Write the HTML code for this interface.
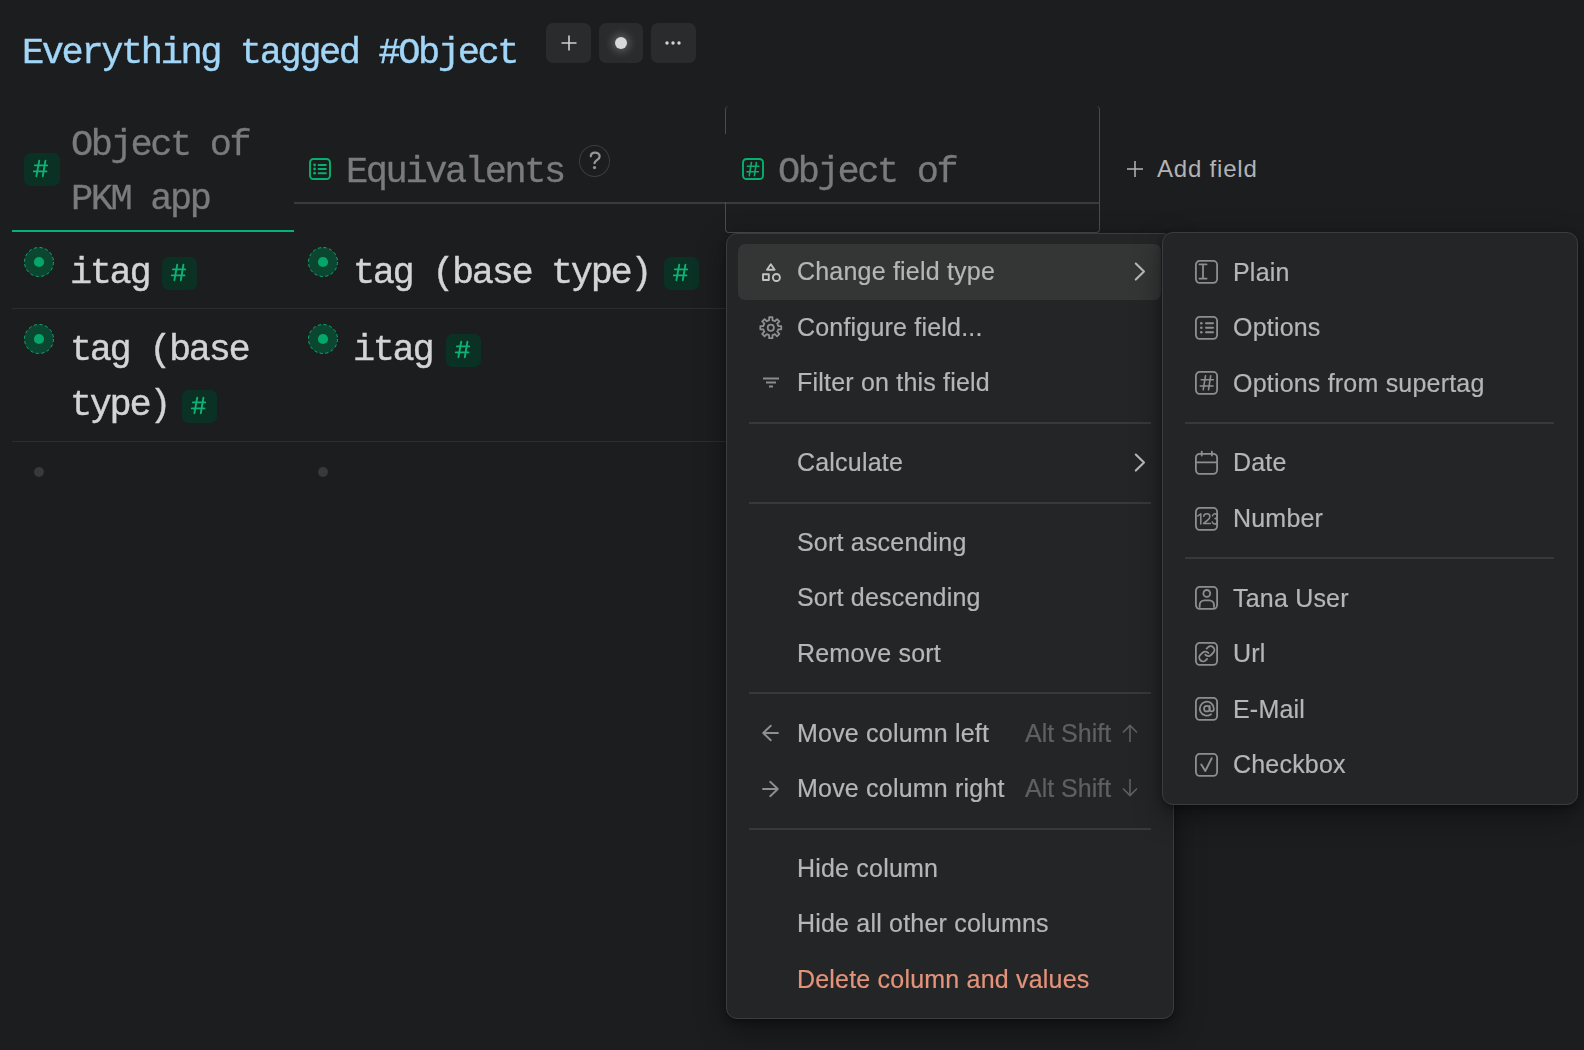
<!DOCTYPE html>
<html><head><meta charset="utf-8">
<style>
html,body{margin:0;padding:0;}
body{-webkit-font-smoothing:antialiased;width:1584px;height:1050px;background:#1c1d1f;position:relative;overflow:hidden;font-family:"Liberation Sans",sans-serif;}
.t{will-change:transform;position:absolute;white-space:pre;line-height:37px;font-family:"Liberation Mono",monospace;font-size:37px;letter-spacing:-2.4px;}
#title{left:22px;top:35px;color:#a2d6f8;-webkit-text-stroke:0.4px #a2d6f8;}
.btn{position:absolute;top:23px;width:45px;height:39.5px;background:#2a2b2d;border-radius:7px;}
.hdr{color:#7b7b7b;-webkit-text-stroke:0.3px #7b7b7b;}
.cell{color:#d4d4d4;-webkit-text-stroke:0.4px #d4d4d4;}
.badge{position:absolute;background:#0a3124;border-radius:6.5px;width:35px;height:33px;}
.badge b{position:absolute;left:0;right:0;top:5px;text-align:center;font-family:"Liberation Sans",sans-serif;font-weight:normal;font-size:23px;color:#1db57c;line-height:24px;}
.bullet{position:absolute;width:30px;height:30px;}
.bullet i{position:absolute;left:9px;top:9px;width:10px;height:10px;border-radius:50%;background:#11b47a;}
.edot{position:absolute;width:10px;height:10px;border-radius:50%;background:#38393b;}
.hline{position:absolute;height:1px;background:#2c2d2f;}
.menu{position:absolute;background:#242527;border:1px solid #3b3c3e;border-radius:11px;box-shadow:0 3px 6px rgba(0,0,0,0.28),0 10px 30px rgba(0,0,0,0.4);box-sizing:border-box;}
.mi{will-change:transform;-webkit-text-stroke:0.2px currentColor;position:absolute;font-size:25px;letter-spacing:0.2px;color:#b6b6b6;line-height:25px;white-space:pre;left:797.4px;}
.si{will-change:transform;-webkit-text-stroke:0.2px currentColor;position:absolute;font-size:25px;letter-spacing:0.2px;color:#b6b6b6;line-height:25px;white-space:pre;left:1233.4px;}
.sc{will-change:transform;-webkit-text-stroke:0.2px currentColor;position:absolute;font-size:25px;color:#5f6061;line-height:25px;white-space:pre;left:1025px;}
.sep{position:absolute;height:2px;background:#38393a;}
svg{position:absolute;overflow:visible;}
</style></head>
<body>
<!-- title -->
<div id="title" class="t">Everything tagged #Object</div>
<div class="btn" style="left:546px"></div>
<div class="btn" style="left:599px;width:44px"></div>
<div class="btn" style="left:651px"></div>
<svg style="left:561px;top:35px" width="16" height="16" viewBox="0 0 16 16"><path d="M8 0.5V15.5M0.5 8H15.5" stroke="#d0d0d0" stroke-width="1.6" fill="none"/></svg>
<div style="position:absolute;left:615px;top:37px;width:12px;height:12px;border-radius:50%;background:#d8d8d8;box-shadow:0 0 9px 3px rgba(255,255,255,0.22);"></div>
<svg style="left:664.8px;top:40.8px" width="18" height="4" viewBox="0 0 18 4"><circle cx="2" cy="2" r="1.7" fill="#d4d4d4"/><circle cx="8" cy="2" r="1.7" fill="#d4d4d4"/><circle cx="14" cy="2" r="1.7" fill="#d4d4d4"/></svg>

<!-- header col1 -->
<div class="badge" style="left:24px;top:153px;width:36px;"><svg width="35" height="33" viewBox="0 0 35 33" style="left:0;top:0"><path d="M15.2 7.8L12.4 23.2M21.4 7.8L18.8 23.2M10.9 12.4H23.2M9.8 18.4H22.5" stroke="#0cb375" stroke-width="1.9" stroke-linecap="round" fill="none"/></svg></div>
<div class="t hdr" style="left:71px;top:126.5px">Object of</div>
<div class="t hdr" style="left:71px;top:181px">PKM app</div>
<div style="position:absolute;left:12px;top:230px;width:282px;height:2px;background:#03b374;"></div>

<!-- header col2 -->
<svg style="left:309px;top:158px" width="22" height="22" viewBox="0 0 22 22"><rect x="1" y="1" width="20" height="20" rx="3.5" stroke="#06b06e" stroke-width="1.9" fill="none"/><path d="M9.6 7H16.8M9.6 11H16.8M9.6 15.2H16.8" stroke="#06b06e" stroke-width="2" stroke-linecap="round"/><circle cx="5.6" cy="7" r="1.4" fill="#06b06e"/><circle cx="5.6" cy="11" r="1.4" fill="#06b06e"/><circle cx="5.6" cy="15.2" r="1.4" fill="#06b06e"/></svg>
<div class="t hdr" style="left:346px;top:154px">Equivalents</div>
<div style="position:absolute;left:579px;top:145px;width:29px;height:30px;border-radius:50%;border:1px solid #3c3d3f;"></div>
<svg style="left:586px;top:148px" width="18" height="24" viewBox="0 0 18 24" fill="none" stroke="#959595" stroke-width="2.3" stroke-linecap="round"><path d="M4.8 8.3C4.8 6 6.7 4.6 9.1 4.6C11.6 4.6 13.6 6.2 13.6 8.4C13.6 10.5 11.9 11.3 10.6 12.3C9.3 13.3 8.5 14.1 8.5 15.2"/><circle cx="8.5" cy="19.6" r="1.6" fill="#959595" stroke="none"/></svg>
<div style="position:absolute;left:294px;top:202px;width:806px;height:2px;background:#3a3b3d;"></div>

<!-- header col3 (selected) -->
<div style="position:absolute;left:725px;top:106px;width:373px;height:126px;border:1px solid #4a4b4d;border-top:0;border-radius:4px;"></div>
<div style="position:absolute;left:724px;top:134px;width:4px;height:68px;background:#1c1d1f;"></div>
<svg style="left:742px;top:158px" width="22" height="22" viewBox="0 0 22 22"><rect x="1" y="1" width="20" height="20" rx="3.5" stroke="#06b06e" stroke-width="1.9" fill="none"/><path d="M9.4 4.6L7.3 17.7M14.4 4.6L12.4 17.7M5.4 8.3H16.9M5 13.7H16.3" stroke="#06b06e" stroke-width="1.6" stroke-linecap="round"/></svg>
<div class="t hdr" style="left:778px;top:154px">Object of</div>

<!-- add field -->
<svg style="left:1127px;top:161px" width="16" height="16" viewBox="0 0 16 16"><path d="M8 0V16M0 8H16" stroke="#b5b5b5" stroke-width="1.5" fill="none"/></svg>
<div style="position:absolute;left:1157px;top:157px;font-size:24px;line-height:24px;letter-spacing:0.8px;color:#b3b3b3;white-space:pre;">Add field</div>

<!-- rows -->
<div class="bullet" style="left:24px;top:247px"><svg width="30" height="30" viewBox="0 0 30 30" style="left:0;top:0"><circle cx="15" cy="15" r="14.5" fill="#0b4630" stroke="#0fa86e" stroke-width="1" stroke-dasharray="3.2 2.5"/><circle cx="15" cy="15" r="5.1" fill="#05a66a"/></svg></div>
<div class="t cell" style="left:70px;top:255px">itag</div>
<div class="badge" style="left:162px;top:257px"><svg width="35" height="33" viewBox="0 0 35 33" style="left:0;top:0"><path d="M15.2 7.8L12.4 23.2M21.4 7.8L18.8 23.2M10.9 12.4H23.2M9.8 18.4H22.5" stroke="#0cb375" stroke-width="1.9" stroke-linecap="round" fill="none"/></svg></div>
<div class="bullet" style="left:308px;top:247px"><svg width="30" height="30" viewBox="0 0 30 30" style="left:0;top:0"><circle cx="15" cy="15" r="14.5" fill="#0b4630" stroke="#0fa86e" stroke-width="1" stroke-dasharray="3.2 2.5"/><circle cx="15" cy="15" r="5.1" fill="#05a66a"/></svg></div>
<div class="t cell" style="left:353px;top:255px">tag (base type)</div>
<div class="badge" style="left:664px;top:257px"><svg width="35" height="33" viewBox="0 0 35 33" style="left:0;top:0"><path d="M15.2 7.8L12.4 23.2M21.4 7.8L18.8 23.2M10.9 12.4H23.2M9.8 18.4H22.5" stroke="#0cb375" stroke-width="1.9" stroke-linecap="round" fill="none"/></svg></div>
<div class="hline" style="left:12px;top:308px;width:714px;"></div>

<div class="bullet" style="left:24px;top:324px"><svg width="30" height="30" viewBox="0 0 30 30" style="left:0;top:0"><circle cx="15" cy="15" r="14.5" fill="#0b4630" stroke="#0fa86e" stroke-width="1" stroke-dasharray="3.2 2.5"/><circle cx="15" cy="15" r="5.1" fill="#05a66a"/></svg></div>
<div class="t cell" style="left:70px;top:332px">tag (base</div>
<div class="t cell" style="left:70px;top:387px">type)</div>
<div class="badge" style="left:182px;top:390px"><svg width="35" height="33" viewBox="0 0 35 33" style="left:0;top:0"><path d="M15.2 7.8L12.4 23.2M21.4 7.8L18.8 23.2M10.9 12.4H23.2M9.8 18.4H22.5" stroke="#0cb375" stroke-width="1.9" stroke-linecap="round" fill="none"/></svg></div>
<div class="bullet" style="left:308px;top:324px"><svg width="30" height="30" viewBox="0 0 30 30" style="left:0;top:0"><circle cx="15" cy="15" r="14.5" fill="#0b4630" stroke="#0fa86e" stroke-width="1" stroke-dasharray="3.2 2.5"/><circle cx="15" cy="15" r="5.1" fill="#05a66a"/></svg></div>
<div class="t cell" style="left:353px;top:332px">itag</div>
<div class="badge" style="left:446px;top:334px"><svg width="35" height="33" viewBox="0 0 35 33" style="left:0;top:0"><path d="M15.2 7.8L12.4 23.2M21.4 7.8L18.8 23.2M10.9 12.4H23.2M9.8 18.4H22.5" stroke="#0cb375" stroke-width="1.9" stroke-linecap="round" fill="none"/></svg></div>
<div class="hline" style="left:12px;top:441px;width:714px;"></div>

<div class="edot" style="left:34px;top:467px"></div>
<div class="edot" style="left:318px;top:467px"></div>

<!-- main menu -->
<div class="menu" style="left:726px;top:233px;width:448px;height:786px;"></div>
<div style="position:absolute;left:738px;top:244px;width:423px;height:56px;background:#343535;border-radius:7px;"></div>
<div class="mi" style="top:259px">Change field type</div>
<div class="mi" style="top:315px">Configure field...</div>
<div class="mi" style="top:370px">Filter on this field</div>
<div class="sep" style="left:749px;top:422px;width:402px;"></div>
<div class="mi" style="top:450px">Calculate</div>
<div class="sep" style="left:749px;top:502px;width:402px;"></div>
<div class="mi" style="top:530px">Sort ascending</div>
<div class="mi" style="top:585px">Sort descending</div>
<div class="mi" style="top:641px">Remove sort</div>
<div class="sep" style="left:749px;top:692px;width:402px;"></div>
<div class="mi" style="top:721px">Move column left</div>
<div class="sc" style="top:721px">Alt Shift</div>
<div class="mi" style="top:776px">Move column right</div>
<div class="sc" style="top:776px">Alt Shift</div>
<div class="sep" style="left:749px;top:828px;width:402px;"></div>
<div class="mi" style="top:856px">Hide column</div>
<div class="mi" style="top:911px">Hide all other columns</div>
<div class="mi" style="top:967px;color:#e4937a">Delete column and values</div>

<!-- main menu icons -->
<svg style="left:761px;top:262px" width="20" height="20" viewBox="0 0 20 20" fill="none" stroke="#c2c2c2" stroke-width="1.9" stroke-linejoin="round"><path d="M9.8 2.2L13.6 7.8H6Z"/><rect x="2" y="12.2" width="5.8" height="5.8"/><circle cx="15.4" cy="15.5" r="3.5"/></svg>
<svg style="left:759px;top:316px" width="24" height="24" viewBox="0 0 24 24" fill="none" stroke="#8f8f8f" stroke-width="1.8" stroke-linejoin="round"><path d="M8.89 4.68 L10.09 4.29 L10.14 1.23 L13.46 1.23 L13.51 4.29 L14.71 4.68 L15.83 5.25 L18.03 3.12 L20.38 5.47 L18.25 7.67 L18.82 8.79 L19.21 9.99 L22.27 10.04 L22.27 13.36 L19.21 13.41 L18.82 14.61 L18.25 15.73 L20.38 17.93 L18.03 20.28 L15.83 18.15 L14.71 18.72 L13.51 19.11 L13.46 22.17 L10.14 22.17 L10.09 19.11 L8.89 18.72 L7.77 18.15 L5.57 20.28 L3.22 17.93 L5.35 15.73 L4.78 14.61 L4.39 13.41 L1.33 13.36 L1.33 10.04 L4.39 9.99 L4.78 8.79 L5.35 7.67 L3.22 5.47 L5.57 3.12 L7.77 5.25Z"/><circle cx="11.8" cy="11.7" r="3.1"/></svg>
<svg style="left:762px;top:377.4px" width="18" height="12" viewBox="0 0 18 12" stroke="#8c8c8c" stroke-width="1.8"><path d="M1 1.5H17M4 5.5H14M7 9.5H11"/></svg>
<svg style="left:1134px;top:262px" width="12" height="19" viewBox="0 0 12 19" fill="none" stroke="#bababa" stroke-width="2.1" stroke-linecap="round" stroke-linejoin="round"><path d="M1.8 1.6L10 9.5L1.8 17.6"/></svg>
<svg style="left:1134px;top:453px" width="12" height="19" viewBox="0 0 12 19" fill="none" stroke="#bababa" stroke-width="2.1" stroke-linecap="round" stroke-linejoin="round"><path d="M1.8 1.6L10 9.5L1.8 17.6"/></svg>
<svg style="left:762px;top:725px" width="17" height="16" viewBox="0 0 17 16" fill="none" stroke="#8f8f8f" stroke-width="1.9" stroke-linecap="round" stroke-linejoin="round"><path d="M16 8H1.2M8.8 0.8L1.2 8L8.8 15.2"/></svg>
<svg style="left:762px;top:781px" width="17" height="16" viewBox="0 0 17 16" fill="none" stroke="#8f8f8f" stroke-width="1.9" stroke-linecap="round" stroke-linejoin="round"><path d="M1 8H15.8M8.2 0.8L15.8 8L8.2 15.2"/></svg>
<svg style="left:1122px;top:724px" width="16" height="18" viewBox="0 0 16 18" fill="none" stroke="#5f6061" stroke-width="1.6"><path d="M8 18V1.5M1 8.5L8 1.5L15 8.5"/></svg>
<svg style="left:1122px;top:779px" width="16" height="18" viewBox="0 0 16 18" fill="none" stroke="#5f6061" stroke-width="1.6"><path d="M8 0V16.5M1 9.5L8 16.5L15 9.5"/></svg>

<!-- submenu -->
<div class="menu" style="left:1162px;top:232px;width:416px;height:573px;"></div>
<div class="si" style="top:260px">Plain</div>
<div class="si" style="top:315px">Options</div>
<div class="si" style="top:371px">Options from supertag</div>
<div class="sep" style="left:1185px;top:422px;width:369px;"></div>
<div class="si" style="top:450px">Date</div>
<div class="si" style="top:506px">Number</div>
<div class="sep" style="left:1185px;top:557px;width:369px;"></div>
<div class="si" style="top:586px">Tana User</div>
<div class="si" style="top:641px">Url</div>
<div class="si" style="top:697px">E-Mail</div>
<div class="si" style="top:752px">Checkbox</div>

<!-- submenu icons -->
<svg style="left:1195px;top:260px" width="23" height="24" viewBox="0 0 23 24" fill="none" stroke="#8e8e8e" stroke-width="1.8" stroke-linecap="round" stroke-linejoin="round"><rect x="0.9" y="0.9" width="21.2" height="22" rx="3.8"/><path d="M4.4 4.3H11.6M8 4.3V18.6M4.4 18.6H11.6"/></svg>
<svg style="left:1195px;top:316px" width="23" height="24" viewBox="0 0 23 24" fill="none" stroke="#8e8e8e" stroke-width="1.8" stroke-linecap="round" stroke-linejoin="round"><rect x="0.9" y="0.9" width="21.2" height="22" rx="3.8"/><path d="M11 7.3H18M11 11.8H18M11 16.3H18" stroke-width="2"/><circle cx="6.3" cy="7.3" r="1.3" fill="#8e8e8e" stroke="none"/><circle cx="6.3" cy="11.8" r="1.3" fill="#8e8e8e" stroke="none"/><circle cx="6.3" cy="16.3" r="1.3" fill="#8e8e8e" stroke="none"/></svg>
<svg style="left:1195px;top:371px" width="23" height="24" viewBox="0 0 23 24" fill="none" stroke="#8e8e8e" stroke-width="1.8" stroke-linecap="round" stroke-linejoin="round"><rect x="0.9" y="0.9" width="21.2" height="22" rx="3.8"/><path d="M10.5 4.7L8.2 18.8M15.7 4.7L13.5 18.8M6.2 8.8H18.3M5.3 15H18" stroke-width="1.6"/></svg>
<svg style="left:1195px;top:451px" width="23" height="25" viewBox="0 0 23 25" fill="none" stroke="#8e8e8e" stroke-width="1.8" stroke-linecap="round" stroke-linejoin="round"><rect x="0.9" y="2.8" width="21.2" height="20.1" rx="3.8"/><path d="M0.9 11.4H22.1M6.7 0.6V4.5M16.9 0.6V4.5"/></svg>
<svg style="left:1195px;top:507px" width="23" height="24" viewBox="0 0 23 24" fill="none" stroke="#8e8e8e" stroke-width="1.8" stroke-linecap="round" stroke-linejoin="round"><path d="M2.7 9L5.8 6.8V17M8.7 9.3C8.9 7.7 10.1 6.8 11.8 6.8C13.6 6.8 14.9 7.9 14.9 9.5C14.9 11 14 11.9 12.6 13.1L8.6 16.4H15.3M17.5 8.8C17.8 7.5 18.7 6.8 19.9 6.8C21.3 6.8 22.2 7.8 22.2 9.2C22.2 10.6 21.2 11.6 19.9 11.6C21.4 11.6 22.4 12.6 22.4 14.2C22.4 16 21.3 17.1 19.9 17.1C18.7 17.1 17.7 16.3 17.3 15" stroke-width="1.5"/><rect x="0.9" y="0.9" width="21.2" height="22" rx="3.8"/></svg>
<svg style="left:1195px;top:586px" width="23" height="24" viewBox="0 0 23 24" fill="none" stroke="#8e8e8e" stroke-width="1.8" stroke-linecap="round" stroke-linejoin="round"><rect x="0.9" y="0.9" width="21.2" height="22" rx="3.8"/><circle cx="11.8" cy="7.4" r="3.4"/><path d="M4.7 21V19C4.7 16.3 6.7 14.3 9.5 14.3H14.2C17 14.3 19 16.3 19 19V21"/></svg>
<svg style="left:1195px;top:642px" width="23" height="24" viewBox="0 0 23 24" fill="none" stroke="#8e8e8e" stroke-width="1.8" stroke-linecap="round" stroke-linejoin="round"><rect x="0.9" y="0.9" width="21.2" height="22" rx="3.8"/><g transform="translate(11.83 11.83) scale(0.76) translate(-12 -12)" stroke-width="2.4"><path d="M10 13a5 5 0 0 0 7.54.54l3-3a5 5 0 0 0-7.07-7.07l-1.72 1.71"/><path d="M14 11a5 5 0 0 0-7.54-.54l-3 3a5 5 0 0 0 7.07 7.07l1.71-1.71"/></g></svg>
<svg style="left:1195px;top:697px" width="23" height="24" viewBox="0 0 23 24" fill="none" stroke="#8e8e8e" stroke-width="1.8" stroke-linecap="round" stroke-linejoin="round"><rect x="0.9" y="0.9" width="21.2" height="22" rx="3.8"/><g transform="translate(11.83 11.67) scale(0.7) translate(-12 -12)" stroke-width="2.5"><circle cx="12" cy="12" r="4"/><path d="M16 8v5a3 3 0 0 0 6 0v-1a10 10 0 1 0-4 8"/></g></svg>
<svg style="left:1195px;top:753px" width="23" height="24" viewBox="0 0 23 24" fill="none" stroke="#8e8e8e" stroke-width="1.8" stroke-linecap="round" stroke-linejoin="round"><rect x="0.9" y="0.9" width="21.2" height="22" rx="3.8"/><path d="M6.3 11.5L10.3 18L16.7 5.3" stroke-width="1.9"/></svg>
</body></html>
